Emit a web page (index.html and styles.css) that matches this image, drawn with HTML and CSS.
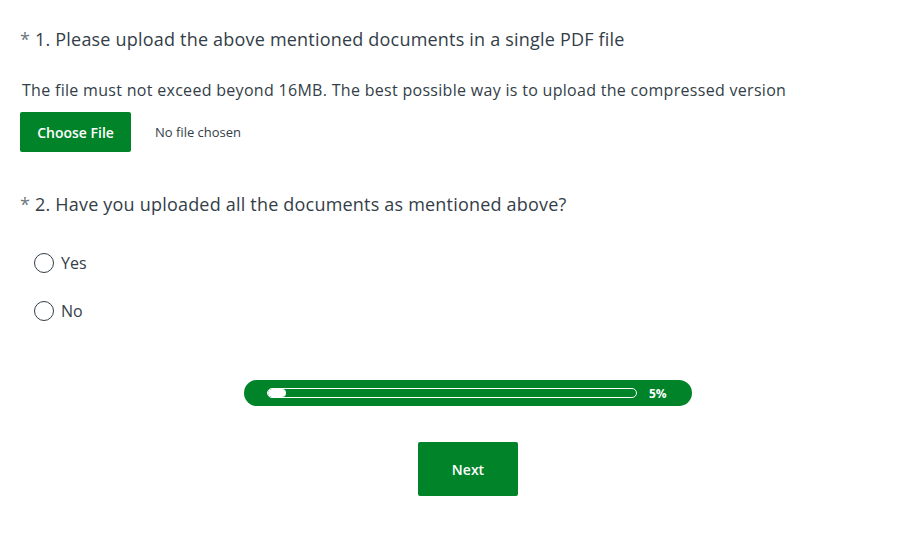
FILE: index.html
```html
<!DOCTYPE html>
<html lang="en">

<head>
  <meta charset="UTF-8">
  <meta name="viewport" content="width=device-width, initial-scale=1.0">
  <title>Document upload</title>
  <link rel="stylesheet" href="styles.css">
</head>

<body>
  <form class="survey">
    <section class="question">
      <h2 class="question-title"><span class="required">*</span> 1. Please upload the above mentioned documents in a single PDF file</h2>
      <p class="question-help">The file must not exceed beyond 16MB. The best possible way is to upload the compressed version</p>
      <div class="file-row">
        <label class="file-button" for="upload">Choose File</label>
        <input id="upload" class="file-input" type="file" accept="application/pdf">
        <span class="file-name">No file chosen</span>
      </div>
    </section>

    <section class="question">
      <h2 class="question-title"><span class="required">*</span> 2. Have you uploaded all the documents as mentioned above?</h2>
      <ul class="choices">
        <li>
          <label class="choice">
            <input type="radio" name="uploaded" value="yes">
            <span class="radio"></span>
            Yes
          </label>
        </li>
        <li>
          <label class="choice">
            <input type="radio" name="uploaded" value="no">
            <span class="radio"></span>
            No
          </label>
        </li>
      </ul>
    </section>

    <div class="progress">
      <div class="progress-track">
        <div class="progress-fill" style="width: 5%"></div>
      </div>
      <span class="progress-label">5%</span>
    </div>

    <div class="actions">
      <button type="submit" class="next-button">Next</button>
    </div>
  </form>
</body>

</html>
```

FILE: styles.css
```css
* {
  margin: 0;
  padding: 0;
  box-sizing: border-box;
  font-family: 'Open Sans', 'Liberation Sans', sans-serif;
}

body {
  background: #fff;
  color: #333e48;
}

.survey {
  padding: 26px 0 0 20px;
}

.question-title {
  font-size: 18px;
  font-weight: 400;
  line-height: 26px;
  letter-spacing: 0.2px;
  color: #333e48;
}

.required {
  color: #6b787f;
}

.question-help {
  font-size: 16px;
  line-height: 22px;
  letter-spacing: 0.3px;
  margin: 27px 0 0 2px;
}

.file-row {
  display: flex;
  align-items: center;
  margin-top: 11px;
}

.file-input {
  display: none;
}

.file-button {
  background: #008329;
  color: #fff;
  font-size: 14px;
  font-weight: 600;
  height: 40px;
  width: 111px;
  display: flex;
  align-items: center;
  justify-content: center;
  border-radius: 2px;
  cursor: pointer;
}

.file-name {
  font-size: 13px;
  margin-left: 24px;
  color: #333e48;
}

.question + .question {
  margin-top: 39px;
}

.choices {
  list-style: none;
  margin: 35px 0 0 14px;
}

.choices li + li {
  margin-top: 26px;
}

.choice {
  display: flex;
  align-items: center;
  font-size: 16px;
  line-height: 22px;
  cursor: pointer;
}

.choice input {
  display: none;
}

.radio {
  width: 20px;
  height: 20px;
  border: 1px solid #333e48;
  border-radius: 50%;
  margin-right: 7px;
}

.progress {
  width: 448px;
  height: 26px;
  margin: 58px 0 0 224px;
  background: #008329;
  border-radius: 13px;
  display: flex;
  align-items: center;
  padding-left: 23px;
}

.progress-track {
  width: 370px;
  height: 10px;
  border: 1px solid #fff;
  border-radius: 5px;
  overflow: hidden;
}

.progress-fill {
  height: 100%;
  background: #fff;
  border-radius: 4px;
}

.progress-label {
  color: #fff;
  font-size: 12px;
  font-weight: 700;
  margin-left: 12px;
}

.actions {
  display: flex;
  margin: 36px 0 0 398px;
}

.next-button {
  background: #008329;
  color: #fff;
  border: 0;
  border-radius: 2px;
  width: 100px;
  height: 54px;
  font-size: 14px;
  font-weight: 600;
  cursor: pointer;
}
```
